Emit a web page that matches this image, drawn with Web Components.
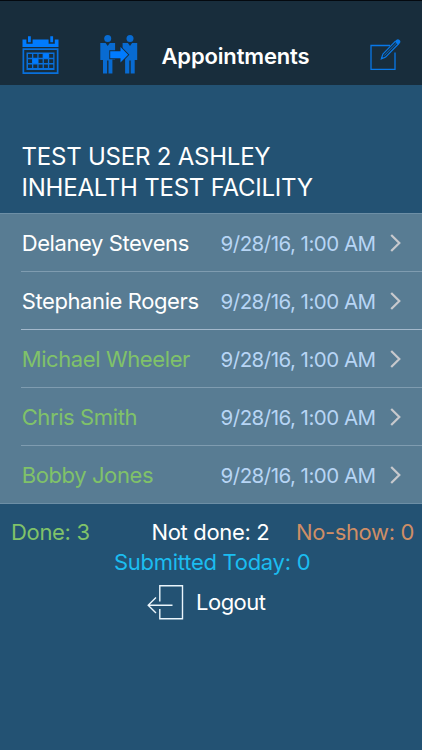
<!DOCTYPE html>
<html lang="en">
<head>
<meta charset="utf-8">
<title>Appointments</title>
<style>
  html, body {
    margin: 0;
    height: 100%;
  }
  body {
    background: #235273;
    color: #fff;
    font-family: Inter, "Liberation Sans", sans-serif;
    overflow: hidden;
  }
</style>
</head>
<body>
<appointments-app></appointments-app>

<script>
// nav-bar
class NavBar extends HTMLElement {
  constructor() {
    super();
    this.attachShadow({ mode: 'open' });
  }

  connectedCallback() {
    this.shadowRoot.innerHTML = `
      <style>
        :host {
          display: flex;
          align-items: flex-start;
          box-sizing: border-box;
          height: 85px;
          padding: 34px 21px 0 22px;
          border-top: 1px solid #04090f;
          background: #182d3c;
        }
        svg {
          display: block;
          flex: none;
        }
        .people {
          margin-left: 40px;
        }
        .edit {
          margin-left: auto;
        }
        h1 {
          margin: 7px 0 0 23.500px;
          font-size: 22px;
          line-height: 28px;
          font-weight: 600;
          letter-spacing: -0.150px;
          white-space: nowrap;
        }
      </style>
      <svg width="38" height="40" viewBox="0 0 38 40" fill="#007bff">
        <path d="M.5 4.500H4.400V8.800h6.200V4.500H26.600V8.800h6.200V4.500H36.500V12H.5z"/>
        <path d="M6 1.300h2.800v6H6zM28.300 1.300h2.800v6h-2.800z"/>
        <path fill="#0870dc" fill-rule="evenodd" d="M.5 13.200h36V39H.5zM2.200 14.900V37.300h32.600V14.900z"/>
        <path fill="#0870dc" fill-rule="evenodd" d="M4.500 17.500h28V35h-28zM6 19v3.700h4V19zm5.300 0v3.700h4V19zm5.300 0v3.700h4V19zm10.600 0v3.700h4V19zM6 24.200v3.700h4v-3.700zm10.600 0v3.700h4v-3.700zm5.300 0v3.700h4v-3.700zm5.300 0v3.700h4v-3.700zM6 29.400v3.700h4v-3.700zm5.300 0v3.700h4v-3.700zm5.300 0v3.700h4v-3.700zm5.300 0v3.700h4v-3.700zm5.300 0v3.700h4v-3.700z"/>
        <path d="M10.500 23.500h5.500v5h-5.500zM21.200 18.300h5.500v5h-5.500z"/>
      </svg>
      <svg class="people" width="38" height="40" viewBox="0 0 38 40" fill="#086bd2">
        <circle cx="7.700" cy="3.500" r="3.500"/>
        <circle cx="30" cy="3.500" r="3.500"/>
        <path d="M.3 8H5.600l2.100 3 2.100-3h5.300v16.500H12.400v14H8.500V25.500H7.100v13H3V25H.3zM22.600 8h5.300l2.100 3 2.100-3H37.200v17h-2.500v13.500H30.700V25.500h-1.400v13h-4.200V23h-2.500z"/>
        <path fill="#007bff" stroke="#182d3c" stroke-width="1.800" paint-order="stroke" d="M10.200 16.200h10.300V12l7.600 7.800-7.600 7.800v-4.300H10.200z"/>
      </svg>
      <h1><slot></slot></h1>
      <svg class="edit" width="31" height="36" viewBox="0 0 31 36" fill="none" stroke="#0878e8" stroke-width="1.300">
        <path d="M20 10.500H1V34.300H25V17.500"/>
        <path stroke-width="1.200" d="M12.800 19.200L25.500 6.100M15.600 22.100L28.400 9M12.800 19.200L11.400 23.700l4.200-1.600"/>
        <path stroke-width=".8" d="M14.200 20.600L27 7.500"/>
        <path fill="#0878e8" stroke="none" d="M24.800 6.500l1.400-1.400a2.200 2.200 0 0 1 3.400 3.300l-1.400 1.500zM11.600 21.800l1.600 1.500-2.400 1.100z"/>
      </svg>
    `;
  }
}
customElements.define('nav-bar', NavBar);

// appointment-row
class AppointmentRow extends HTMLElement {
  constructor() {
    super();
    this.attachShadow({ mode: 'open' });
  }

  connectedCallback() {
    this.shadowRoot.innerHTML = `
      <style>
        :host {
          display: flex;
          box-sizing: border-box;
          height: 58px;
          margin-left: 21px;
          padding-right: 21px;
          border-bottom: 1px solid var(--line, #7f9cb0);
          color: #fff;
          line-height: 58px;
          white-space: nowrap;
        }
        :host([done]) {
          color: #80c269;
        }
        .name {
          flex: 1;
          padding-left: 0.700px;
          font-size: 22px;
          letter-spacing: -0.400px;
        }
        .date {
          color: #b7d5f5;
          font-size: 20.500px;
          letter-spacing: -0.520px;
          padding-top: 1px;
        }
        svg {
          align-self: flex-start;
          margin: 20px 0 0 14.500px;
        }
      </style>
      <span class="name"><slot></slot></span>
      <span class="date">${this.getAttribute('date')}</span>
      <svg width="11" height="18" viewBox="0 0 11 18" fill="none" stroke="#c7c9cd" stroke-width="2.200">
        <path d="M1.200 1L9.300 9 1.200 17"/>
      </svg>
    `;
  }
}
customElements.define('appointment-row', AppointmentRow);

// day-summary
class DaySummary extends HTMLElement {
  constructor() {
    super();
    this.attachShadow({ mode: 'open' });
  }

  connectedCallback() {
    this.shadowRoot.innerHTML = `
      <style>
        :host {
          display: block;
          padding: 13px 8px 0 11px;
          font-size: 22px;
          line-height: 30px;
          letter-spacing: -0.330px;
          white-space: nowrap;
        }
        .counts {
          display: grid;
          grid-template-columns: 140.500px 144.500px 1fr;
        }
        .done { color: #80c269; }
        .missed {
          color: #cf8e66;
          letter-spacing: -0.380px;
        }
        .today {
          padding-left: 103px;
          color: #1bbdf0;
          letter-spacing: -0.280px;
        }
      </style>
      <div class="counts">
        <span class="done">Done: ${this.getAttribute('done')}</span>
        <span>Not done: ${this.getAttribute('open')}</span>
        <span class="missed">No-show: ${this.getAttribute('missed')}</span>
      </div>
      <div class="today">Submitted Today: ${this.getAttribute('submitted')}</div>
    `;
  }
}
customElements.define('day-summary', DaySummary);

// logout-button
class LogoutButton extends HTMLElement {
  constructor() {
    super();
    this.attachShadow({ mode: 'open' });
  }

  connectedCallback() {
    this.shadowRoot.innerHTML = `
      <style>
        :host {
          display: flex;
          align-items: flex-start;
          gap: 12px;
          padding: 7px 0 0 147px;
          font-size: 22px;
          line-height: 37px;
          letter-spacing: -0.500px;
        }
      </style>
      <svg width="37" height="36" viewBox="0 0 37 36" fill="none" stroke="#eaf5fc" stroke-width="1.400">
        <path d="M12.800 17.500V1.700H35.500V34.800H12.800V25M1 21.300H25.500M9 13.500L1.200 21.300 9 29.100"/>
      </svg>
      <span><slot></slot></span>
    `;
  }
}
customElements.define('logout-button', LogoutButton);

// appointments-app
class AppointmentsApp extends HTMLElement {
  constructor() {
    super();
    this.attachShadow({ mode: 'open' });
    this.appointments = [
      { name: 'Delaney Stevens', date: '9/28/16, 1:00 AM', done: false },
      { name: 'Stephanie Rogers', date: '9/28/16, 1:00 AM', done: false },
      { name: 'Michael Wheeler', date: '9/28/16, 1:00 AM', done: true },
      { name: 'Chris Smith', date: '9/28/16, 1:00 AM', done: true },
      { name: 'Bobby Jones', date: '9/28/16, 1:00 AM', done: true }
    ];
  }

  connectedCallback() {
    this.shadowRoot.innerHTML = `
      <style>
        :host {
          display: block;
          height: 100%;
        }
        .facility {
          box-sizing: border-box;
          height: 128px;
          padding: 56px 0 0 21.500px;
          font-size: 24px;
          line-height: 31px;
          letter-spacing: -0.220px;
          white-space: nowrap;
        }
        .list {
          background: #587c93;
          border-top: 1px solid #6d8fa6;
        }
        .list appointment-row:nth-child(2) {
          --line: #a3b8cb;
        }
        .list appointment-row:last-child {
          margin-left: 0;
          padding-left: 21px;
          --line: #6d8fa6;
        }
      </style>
      <nav-bar>Appointments</nav-bar>
      <div class="facility">
        <div>TEST USER 2 ASHLEY</div>
        <div>INHEALTH TEST FACILITY</div>
      </div>
      <div class="list">
        ${this.appointments.map((item) => `<appointment-row date="${item.date}" ${item.done ? 'done' : ''}>${item.name}</appointment-row>`).join('')}
      </div>
      <day-summary done="3" open="2" missed="0" submitted="0"></day-summary>
      <logout-button>Logout</logout-button>
    `;
  }
}
customElements.define('appointments-app', AppointmentsApp);
</script>
</body>
</html>
